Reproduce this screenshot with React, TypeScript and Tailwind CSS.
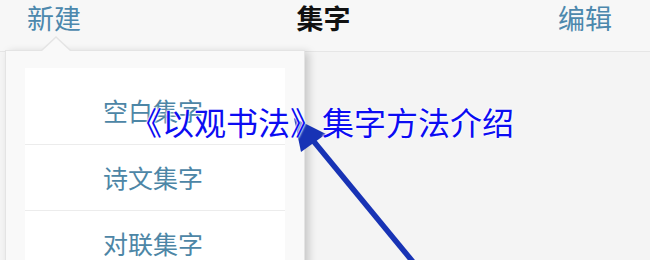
// App.tsx
// "新建" popup menu screenshot with a blue overlay caption and arrow.

const CJK = '"Noto Sans CJK SC", "Noto Sans", sans-serif';

const ITEMS = ['空白集字', '诗文集字', '对联集字'];

export default function App() {
  return (
    <div
      className="relative w-[650px] h-[260px] overflow-hidden bg-[#f4f4f4]"
      style={{ fontFamily: CJK }}
    >
      {/* Top bar */}
      <header className="h-[52px] flex items-start justify-between pl-[27px] pr-[38px] bg-[#f7f7f7] border-b border-[#e6e6e6]">
        <span className="text-[27px] leading-[36px] text-[#4c88ad]">新建</span>
        <span className="text-[27px] leading-[36px] font-bold text-[#111] ml-[8px]">集字</span>
        <span className="text-[27px] leading-[36px] text-[#4c88ad]">编辑</span>
      </header>

      {/* Dropdown popup */}
      <div className="absolute left-[5px] top-[50px] w-[300px] h-[230px] bg-[#f9f9f9] border border-[#e4e4e4] shadow-[4px_2px_8px_rgba(0,0,0,0.18)] pt-[17px] px-[19px]">
        {/* caret */}
        <div className="absolute left-[34px] -top-[15px] w-0 h-0 border-l-[16px] border-r-[16px] border-b-[15px] border-l-transparent border-r-transparent border-b-[#e4e4e4]" />
        <div className="absolute left-[35px] -top-[13px] w-0 h-0 border-l-[15px] border-r-[15px] border-b-[14px] border-l-transparent border-r-transparent border-b-[#f9f9f9]" />

        <ul className="bg-white flex flex-col pt-[10px]">
          {ITEMS.map((label, i) => (
            <li
              key={label}
              className={
                'h-[66px] flex items-center justify-center text-[25px] text-[#4d86a6] ' +
                (i > 0 ? 'border-t border-[#ececec]' : '')
              }
            >
              <span className="pr-[4px]">{label}</span>
            </li>
          ))}
        </ul>
      </div>

      {/* Arrow */}
      <svg className="absolute inset-0" width="650" height="260" viewBox="0 0 650 260">
        <line x1="306" y1="132" x2="418" y2="268" stroke="#1833b5" strokeWidth="5.5" />
        <polygon points="294,118 301,152 326,134" fill="#1833b5" />
      </svg>

      {/* Caption overlay */}
      <div
        className="absolute left-[130px] top-[100px] text-[32px] leading-[42px] text-[#0c0cf2] whitespace-nowrap"
        style={{ textShadow: '0 0 2px #fff, 0 0 2px #fff, 0 0 3px #fff' }}
      >
        《以观书法》集字方法介绍
      </div>
    </div>
  );
}
